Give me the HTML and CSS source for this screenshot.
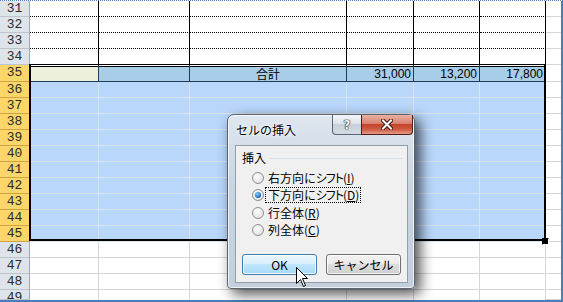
FILE: index.html
```html
<!DOCTYPE html>
<html lang="ja">
<head>
<meta charset="utf-8">
<title>セルの挿入</title>
<link rel="stylesheet" href="styles.css">
</head>
<body>
<div class="sheet">
  <div class="row r-dot"><div class="h">31</div><div></div><div></div><div></div><div></div><div></div><div></div><div class="g"></div></div>
  <div class="row r-dot"><div class="h">32</div><div></div><div></div><div></div><div></div><div></div><div></div><div class="g"></div></div>
  <div class="row r-dot"><div class="h">33</div><div></div><div></div><div></div><div></div><div></div><div></div><div class="g"></div></div>
  <div class="row r-34"><div class="h">34</div><div></div><div></div><div></div><div></div><div></div><div></div><div class="g"></div></div>
  <div class="row r-sum"><div class="h s">35</div><div class="a"></div><div></div><div class="ctr">合計</div><div class="num">31,000</div><div class="num">13,200</div><div class="num">17,800</div><div class="g"></div></div>
  <div class="row r-sel"><div class="h s">36</div><div></div><div></div><div></div><div></div><div></div><div></div><div class="g"></div></div>
  <div class="row r-sel"><div class="h s">37</div><div></div><div></div><div></div><div></div><div></div><div></div><div class="g"></div></div>
  <div class="row r-sel"><div class="h s">38</div><div></div><div></div><div></div><div></div><div></div><div></div><div class="g"></div></div>
  <div class="row r-sel"><div class="h s">39</div><div></div><div></div><div></div><div></div><div></div><div></div><div class="g"></div></div>
  <div class="row r-sel"><div class="h s">40</div><div></div><div></div><div></div><div></div><div></div><div></div><div class="g"></div></div>
  <div class="row r-sel"><div class="h s">41</div><div></div><div></div><div></div><div></div><div></div><div></div><div class="g"></div></div>
  <div class="row r-sel"><div class="h s">42</div><div></div><div></div><div></div><div></div><div></div><div></div><div class="g"></div></div>
  <div class="row r-sel"><div class="h s">43</div><div></div><div></div><div></div><div></div><div></div><div></div><div class="g"></div></div>
  <div class="row r-sel"><div class="h s">44</div><div></div><div></div><div></div><div></div><div></div><div></div><div class="g"></div></div>
  <div class="row r-sel"><div class="h s">45</div><div></div><div></div><div></div><div></div><div></div><div></div><div class="g"></div></div>
  <div class="row r-plain"><div class="h">46</div><div></div><div></div><div></div><div></div><div></div><div></div><div class="g"></div></div>
  <div class="row r-plain"><div class="h">47</div><div></div><div></div><div></div><div></div><div></div><div></div><div class="g"></div></div>
  <div class="row r-plain"><div class="h">48</div><div></div><div></div><div></div><div></div><div></div><div></div><div class="g"></div></div>
  <div class="row r-plain r-last"><div class="h">49</div><div></div><div></div><div></div><div></div><div></div><div></div><div class="g"></div></div>
  <div class="selbox"></div>
  <div class="handle"></div>
</div>

<div class="dialog">
  <div class="titlebar">
    <span class="title">セルの挿入</span>
    <div class="caps">
      <div class="cap help">?</div>
      <div class="cap close">
        <svg width="12" height="11" viewBox="0 0 12 11"><path d="M2 1.5 L10 9.5 M10 1.5 L2 9.5" stroke="#3a1a14" stroke-width="4" stroke-linecap="square"/><path d="M2 1.5 L10 9.5 M10 1.5 L2 9.5" stroke="#fff" stroke-width="2" stroke-linecap="square"/></svg>
      </div>
    </div>
  </div>
  <div class="client">
    <div class="group"><span>挿入</span><span class="rule"></span></div>
    <div class="opts">
      <div class="opt"><span class="radio"></span><span class="lbl">右方向に<span class="kana">シフト</span>(<u>I</u>)</span></div>
      <div class="opt"><span class="radio on"></span><span class="lbl focus">下方向に<span class="kana">シフト</span>(<u>D</u>)</span></div>
      <div class="opt"><span class="radio"></span><span class="lbl">行全体(<u>R</u>)</span></div>
      <div class="opt"><span class="radio"></span><span class="lbl">列全体(<u>C</u>)</span></div>
    </div>
    <div class="btns">
      <div class="btn ok">OK</div>
      <div class="btn">キャンセル</div>
    </div>
  </div>
</div>

<svg class="cursor" width="13" height="21" viewBox="0 0 13 21"><path d="M0.5 0.5 L0.5 16.5 L4.5 12.5 L7.5 19.5 L9.5 18.5 L6.5 11.5 L11.5 11.5 Z" fill="#fff" stroke="#000" stroke-width="1" stroke-linejoin="miter"/></svg>
</body>
</html>
```

FILE: styles.css
```css
body {
  margin: 0;
  width: 563px;
  height: 302px;
  overflow: hidden;
  position: relative;
  background: #fff;
  font-family: "Noto Sans CJK JP", sans-serif;
}

.sheet {
  width: 563px;
  height: 302px;
  box-sizing: border-box;
  border-top: 1px dotted #4a7ebb;
  border-right: 2px solid #4a7ebb;
  border-bottom: 2px solid #4a7ebb;
  position: relative;
  overflow: hidden;
}

.row {
  display: grid;
  grid-template-columns: 30px 69px 91px 157px 67px 66px 66px 15px;
  height: 16px;
}

.row > div {
  box-sizing: border-box;
  border-right: 1px solid #000;
  border-bottom: 1px dotted #000;
  overflow: hidden;
}

.row > .g {
  border-right: 0;
  border-bottom: 1px solid #d6d6d6;
  background: #fff;
}

.row > .h {
  background: #dfe4ea;
  border-right: 1px solid #9ba8b6;
  border-bottom: 1px solid #bcc5cf;
  font-family: "Liberation Mono", monospace;
  font-size: 13px;
  line-height: 15px;
  text-align: center;
  color: #2a2a2a;
}

.row > .h.s {
  background: #fdd669;
  border-bottom-color: #cfa346;
}

.r-34 > div {
  border-bottom-style: solid;
}

.r-sum {
  height: 17px;
}

.r-sum > div {
  background: #a8cde8;
  border-right-color: #1e3b58;
  border-bottom: 1px solid #1e3b58;
  box-shadow: inset 0 1px 0 #fff, inset 0 2px 0 #000;
  font-size: 12px;
  line-height: 14px;
  padding-top: 2px;
  color: #000;
}

.r-sum > .a {
  background: #edf1dc;
}

.r-sum > .ctr {
  text-align: center;
}

.r-sum > .num {
  text-align: right;
  padding-right: 2px;
  font-family: "Liberation Sans", sans-serif;
}

.r-sum > .h {
  box-shadow: none;
  padding-top: 0;
  line-height: 16px;
  font-size: 13px;
  font-family: "Liberation Mono", monospace;
}

.r-sum > .g {
  box-shadow: none;
  background: #fff;
  border-bottom: 1px solid #d6d6d6;
}

.r-sel > div {
  background: #b9d7fb;
  border-right-color: #dce5ef;
  border-bottom: 1px solid #dce5ef;
}

.r-plain > div {
  border-right-color: #d6d6d6;
  border-bottom: 1px solid #d6d6d6;
}

.r-last {
  height: 10px;
}

.r-last > div {
  border-bottom: 0;
}

.selbox {
  position: absolute;
  left: 29px;
  top: 63px;
  width: 517px;
  height: 177px;
  box-sizing: border-box;
  border: 2px solid #000;
  border-top: 0;
}

.handle {
  position: absolute;
  left: 542px;
  top: 237px;
  width: 5px;
  height: 5px;
  background: #000;
  border: 1px solid #fff;
  border-top-color: #000;
  border-left-color: #000;
}

/* dialog */
.dialog {
  position: absolute;
  left: 227px;
  top: 114px;
  width: 188px;
  height: 175px;
  box-sizing: border-box;
  border: 1px solid #5a636e;
  border-radius: 7px 7px 4px 4px;
  background: linear-gradient(#dfe7f0, #c9d5e2 40%, #c3cfdc);
  box-shadow: inset 0 0 0 1px rgba(255,255,255,0.7), 5px 5px 14px rgba(0,0,0,0.7);
  padding: 0 6px 5px 7px;
  display: flex;
  flex-direction: column;
}

.titlebar {
  height: 30px;
  display: flex;
  justify-content: space-between;
  margin-right: -5px;
}

.title {
  font-size: 12px;
  line-height: 30px;
  padding-left: 1px;
  color: #000;
  text-shadow: 0 0 4px #fff, 0 0 2px #fff;
}

.caps {
  display: flex;
  height: 20px;
}

.cap {
  box-sizing: border-box;
  height: 20px;
  display: flex;
  align-items: center;
  justify-content: center;
  border: 1px solid #5b6674;
  border-top: 0;
}

.help {
  width: 29px;
  border-radius: 0 0 0 4px;
  background: linear-gradient(#f3f5f8, #dfe4ea 45%, #c7d0da 50%, #d3dbe4);
  font-family: "DejaVu Sans", sans-serif;
  font-weight: bold;
  font-size: 12px;
  color: #f4f6f8;
  text-shadow: 0 0 1px #2c3540, 0 0 1px #2c3540, 0 0 1px #2c3540, 0 0 1px #2c3540;
  border-right: 0;
}

.close {
  width: 52px;
  border-color: #4e2018;
  border-radius: 0 0 4px 0;
  background: linear-gradient(#eab0a2, #d98370 45%, #c4432b 50%, #cf5a42 75%, #e69a84);
}

.client {
  flex: 1;
  background: #f0f0f0;
  border: 1px solid #939ea9;
  padding: 4px 4px 0 6px;
  display: flex;
  flex-direction: column;
  font-size: 12px;
  color: #000;
}

.group {
  display: flex;
  align-items: center;
  height: 16px;
  line-height: 16px;
}

.rule {
  flex: 1;
  height: 1px;
  background: #d5dfe5;
  margin-left: 4px;
}

.opts {
  margin-top: 3px;
  display: flex;
  flex-direction: column;
}

.opt {
  height: 17.5px;
  display: flex;
  align-items: center;
}

.radio {
  width: 12px;
  height: 12px;
  margin-left: 10px;
  box-sizing: border-box;
  border-radius: 50%;
  border: 1px solid #8d8f91;
  background: radial-gradient(circle at 40% 35%, #ffffff, #e4e4e4 70%, #cfcfcf);
  position: relative;
}

.radio.on::after {
  content: "";
  position: absolute;
  left: 2px;
  top: 2px;
  width: 6px;
  height: 6px;
  border-radius: 50%;
  background: radial-gradient(circle at 40% 35%, #8fd7fb, #1b70c4 60%, #0b4a8f);
}

.lbl {
  margin-left: 1px;
  padding: 0 1px 0 2px;
  border: 1px dotted transparent;
  line-height: 14px;
  font-feature-settings: "palt";
}

.lbl.focus {
  border-color: #000;
}

.kana {
  letter-spacing: -1px;
}

.btns {
  margin-top: 15px;
  display: flex;
  gap: 9px;
}

.btn {
  box-sizing: border-box;
  width: 75px;
  height: 21px;
  border: 1px solid #707070;
  border-radius: 3px;
  background: linear-gradient(#f2f2f2, #ebebeb 45%, #dddddd 50%, #cfcfcf);
  box-shadow: inset 0 0 0 1px rgba(255,255,255,0.8);
  font-size: 12px;
  line-height: 19px;
  text-align: center;
}

.btn.ok {
  border-color: #3c7fb1;
  background: linear-gradient(#eaf6fd, #d9f0fc 45%, #bee6fd 50%, #a7d9f5);
}

.cursor {
  position: absolute;
  left: 296px;
  top: 267px;
}
```
